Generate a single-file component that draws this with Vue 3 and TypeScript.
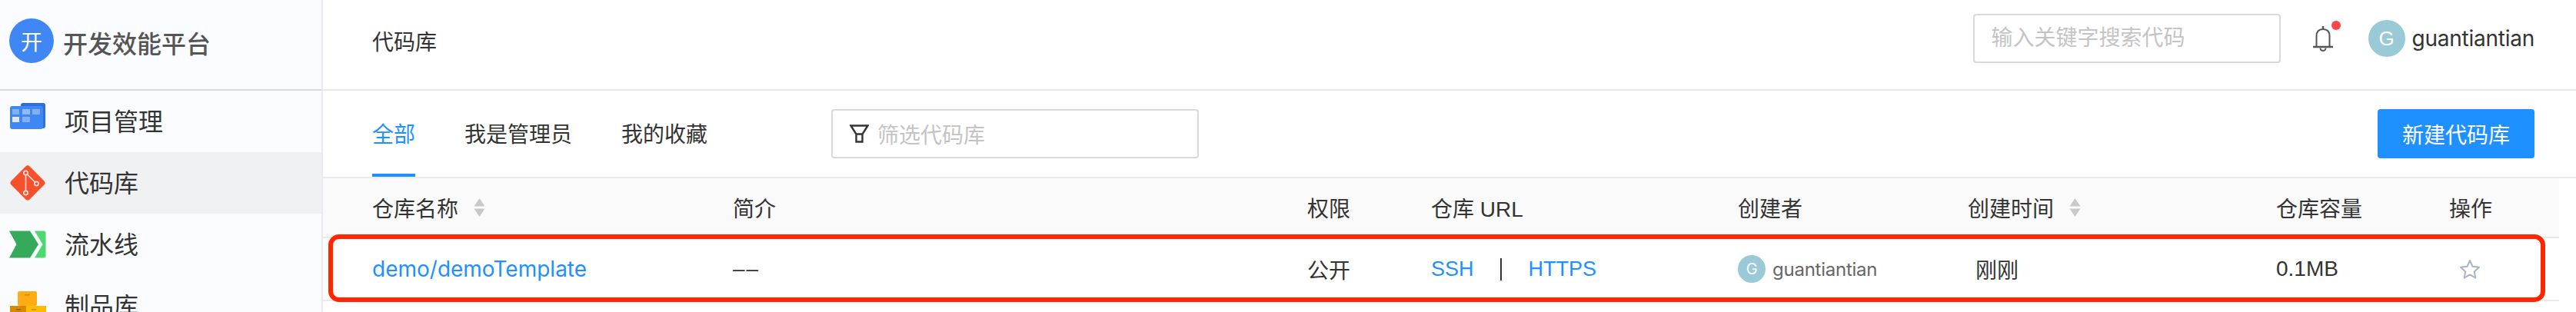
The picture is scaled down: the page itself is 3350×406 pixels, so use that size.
<template>
  <div class="page">
    <aside class="sidebar">
      <div class="brand">
        <span class="brand-logo">开</span>
        <span class="brand-name">开发效能平台</span>
      </div>
      <nav class="menu">
        <a v-for="item in menu" :key="item.key" class="menu-item" :class="{ active: item.key === 'repo' }">
          <svg class="menu-icon" viewBox="0 0 48 48">
            <template v-if="item.key === 'project'">
              <rect x="15" y="0" width="32" height="33" rx="3" fill="#2f6fd8" />
              <rect x="1" y="4" width="43" height="30" rx="3" fill="#3f87f5" />
              <rect x="4" y="8" width="9" height="7" fill="#7fb0f8" />
              <rect x="17" y="8" width="10" height="7" fill="#8fbaf9" />
              <rect x="30" y="8" width="10" height="7" fill="#7fb0f8" />
              <rect x="4" y="18" width="9" height="7" fill="#dbe8fd" />
              <rect x="17" y="18" width="10" height="7" fill="#7fb0f8" />
            </template>
            <template v-else-if="item.key === 'repo'">
              <rect x="7" y="7" width="34" height="34" rx="4" fill="#f4512c" transform="rotate(45 24 24)" />
              <path d="M21.500 11 V37 M21.500 11 L35.500 25" fill="none" stroke="#fbe3dc" stroke-width="1.600" />
              <circle cx="21.500" cy="11" r="2.600" fill="#f4512c" stroke="#fbe3dc" stroke-width="1.600" />
              <circle cx="35.500" cy="25" r="2.600" fill="#f4512c" stroke="#fbe3dc" stroke-width="1.600" />
              <circle cx="21.500" cy="37" r="2.600" fill="#f4512c" stroke="#fbe3dc" stroke-width="1.600" />
            </template>
            <template v-else-if="item.key === 'pipeline'">
              <path d="M0 6.500 H27 L38 24 L27 41.500 H0 L9.500 24 Z" fill="#34aa5a" />
              <path d="M33 6.500 H45 Q47.500 6.500 47.500 9 V39 Q47.500 41.500 45 41.500 H33 L43.500 24 Z" fill="#4cd96f" />
            </template>
            <template v-else>
              <rect x="11" y="5" width="25" height="19" rx="2" fill="#ffac14" />
              <rect x="1" y="24" width="21" height="24" fill="#d68a00" />
              <rect x="22" y="24" width="26" height="24" fill="#fcbc00" />
              <rect x="20" y="9" width="7" height="1.500" fill="#c98a10" />
              <rect x="9" y="28" width="6" height="1.500" fill="#8f5e00" />
              <rect x="29" y="28" width="6" height="1.500" fill="#c98a10" />
            </template>
          </svg>
          <span class="menu-label">{{ item.label }}</span>
        </a>
      </nav>
    </aside>

    <main class="main">
      <header class="topbar">
        <span class="crumb">代码库</span>
        <div class="topbar-right">
          <input class="field search" placeholder="输入关键字搜索代码" />
          <span class="bell">
            <svg viewBox="0 0 26 34" width="26" height="34">
              <path d="M4.500 28 V14 C4.500 8 8 5 13 5 C18 5 21.500 8 21.500 14 V28" fill="none" stroke="#555" stroke-width="2" />
              <path d="M13 1 V5" stroke="#555" stroke-width="2.500" />
              <path d="M0 28 H26" stroke="#555" stroke-width="2.500" />
              <path d="M9.500 29.500 A3.500 3.500 0 0 0 16.500 29.500" fill="none" stroke="#555" stroke-width="2" />
            </svg>
            <i class="bell-dot"></i>
          </span>
          <span class="user">
            <span class="avatar">G</span>
            <span class="user-name">guantiantian</span>
          </span>
        </div>
      </header>

      <section class="toolbar">
        <div class="tabs">
          <a v-for="(tab, i) in tabs" :key="tab" class="tab" :class="{ active: i === 0 }">{{ tab }}</a>
        </div>
        <div class="field filter">
          <svg viewBox="0 0 25 24" width="25" height="24">
            <path d="M1.500 1.500 H23.500 L16.500 12.500 V22.500 H8.500 V12.500 Z M8.500 12.500 H16.500" fill="none" stroke="#333" stroke-width="2.400" />
          </svg>
          <span>筛选代码库</span>
        </div>
        <button class="create">新建代码库</button>
      </section>

      <section class="table">
        <div class="grid head">
          <div v-for="col in columns" :key="col.label" class="th">
            <span>{{ col.label }}</span>
            <svg v-if="col.sort" class="sort" viewBox="0 0 15 24" width="15" height="24">
              <path d="M7.500 0 L14.500 10.500 H0.500 Z M7.500 24 L0.500 13.500 H14.500 Z" fill="#c9c9c9" />
            </svg>
          </div>
        </div>
        <div class="grid row">
          <a class="link repo-name">demo/demoTemplate</a>
          <div class="empty">––</div>
          <div>公开</div>
          <div class="urls">
            <a class="link">SSH</a>
            <i class="sep"></i>
            <a class="link">HTTPS</a>
          </div>
          <div class="creator">
            <span class="avatar small">G</span>
            <span>guantiantian</span>
          </div>
          <div class="time">刚刚</div>
          <div>0.1MB</div>
          <div class="ops">
            <svg viewBox="0 0 28 26" width="28" height="26">
              <path d="M14 2 L17.500 9.800 L26 10.700 L19.700 16.400 L21.400 24.600 L14 20.400 L6.600 24.600 L8.300 16.400 L2 10.700 L10.500 9.800 Z" fill="none" stroke="#a9b3c1" stroke-width="2" stroke-linejoin="round" />
            </svg>
          </div>
        </div>
        <div class="annotation"></div>
      </section>
    </main>
  </div>
</template>

<script setup lang="ts">
const menu = [
  { key: 'project', label: '项目管理' },
  { key: 'repo', label: '代码库' },
  { key: 'pipeline', label: '流水线' },
  { key: 'artifact', label: '制品库' },
];

const tabs = ['全部', '我是管理员', '我的收藏'];

const columns = [
  { label: '仓库名称', sort: true },
  { label: '简介' },
  { label: '权限' },
  { label: '仓库 URL' },
  { label: '创建者' },
  { label: '创建时间', sort: true },
  { label: '仓库容量' },
  { label: '操作' },
];
</script>

<style>
html,
body {
  margin: 0;
  background: #fff;
  overflow: hidden;
}
</style>

<style scoped>
.page {
  display: flex;
  height: 406px;
  overflow: hidden;
  font-family: "Liberation Sans", "Noto Sans CJK SC", sans-serif;
  font-size: 28px;
  color: #333;
}

.sidebar {
  flex: 0 0 420px;
  box-sizing: border-box;
  background: #fbfcff;
  border-right: 2px solid #e8eaee;
}

.brand {
  display: flex;
  align-items: center;
  height: 116px;
  padding-left: 12px;
  border-bottom: 2px solid #d8dadf;
}

.brand-logo {
  display: flex;
  align-items: center;
  justify-content: center;
  width: 58px;
  height: 58px;
  margin-top: -10px;
  border-radius: 50%;
  background: #3f87f5;
  color: #fff;
  font-size: 28px;
}

.brand-name {
  margin: -6px 0 0 12px;
  font-size: 32px;
  font-weight: 500;
  color: #555;
}

.menu-item {
  display: flex;
  align-items: center;
  gap: 24px;
  height: 80px;
  padding-left: 12px;
  font-size: 32px;
  color: #333;
}

.menu-item.active {
  background: #f0f1f3;
}

.menu-icon {
  flex: none;
  width: 48px;
  height: 48px;
}

.menu-label {
  margin-top: -5px;
}

.main {
  flex: 1;
  min-width: 0;
}

.topbar {
  display: flex;
  align-items: center;
  justify-content: space-between;
  box-sizing: content-box;
  height: 100px;
  padding: 0 54px 16px 64px;
  border-bottom: 2px solid #e8eaee;
}

.crumb {
  margin-top: 6px;
}

.topbar-right {
  display: flex;
  align-items: center;
}

.field {
  box-sizing: border-box;
  height: 64px;
  border: 2px solid #d9d9d9;
  border-radius: 4px;
  background: #fff;
  font: inherit;
}

.search {
  width: 400px;
  padding: 0 22px;
  outline: none;
}

.search::placeholder {
  color: #c4c4c4;
  opacity: 1;
}

.bell {
  position: relative;
  display: block;
  height: 34px;
  margin: 0 46px 0 42px;
}

.bell-dot {
  position: absolute;
  top: -6px;
  right: -10px;
  width: 12px;
  height: 12px;
  border-radius: 50%;
  background: #fb4646;
}

.user {
  display: flex;
  align-items: center;
  gap: 9px;
}

.avatar {
  display: flex;
  align-items: center;
  justify-content: center;
  width: 48px;
  height: 48px;
  border-radius: 50%;
  background: #9ac9d7;
  color: #fff;
  font-size: 26px;
}

.avatar.small {
  width: 36px;
  height: 36px;
  font-size: 20px;
}

.user-name {
  font-family: Inter, sans-serif;
  letter-spacing: -0.25px;
  color: #333;
}

.toolbar {
  display: flex;
  align-items: flex-start;
  height: 112px;
  padding: 0 54px 0 64px;
  border-bottom: 2px solid #e8eaee;
}

.tabs {
  display: flex;
  gap: 64px;
}

.tab {
  display: block;
  box-sizing: border-box;
  height: 112px;
  padding-top: 38px;
  line-height: 40px;
}

.tab.active {
  color: #1f90ff;
  border-bottom: 4px solid #1f90ff;
}

.filter {
  display: flex;
  align-items: center;
  gap: 11px;
  width: 478px;
  margin: 24px 0 0 161px;
  padding-left: 22px;
  color: #c4c4c4;
}

.create {
  width: 204px;
  height: 64px;
  margin: 24px 0 0 auto;
  border: 0;
  border-radius: 4px;
  background: #1f90ff;
  color: #fff;
  font: inherit;
}

.table {
  position: relative;
  width: 2908px;
}

.grid {
  display: grid;
  grid-template-columns: 469px 747px 161px 399px 299px 401px 225px 143px;
  align-items: center;
  padding-left: 64px;
  border-bottom: 2px solid #e8eaee;
}

.head {
  height: 76px;
  background: #fafafa;
}

.th {
  display: flex;
  align-items: center;
  gap: 20px;
}

.row {
  height: 80px;
}

.link {
  color: #1f90ff;
}

.repo-name {
  font-family: Inter, sans-serif;
}

.empty {
  letter-spacing: 2px;
}

.urls {
  display: flex;
  align-items: center;
  font-size: 27px;
}

.sep {
  width: 2px;
  height: 29px;
  margin: 0 35px 0 34px;
  background: #333;
}

.creator {
  display: flex;
  align-items: center;
  gap: 9px;
  font-family: Inter, sans-serif;
  letter-spacing: -0.25px;
  font-size: 24px;
  color: #666;
}

.time {
  padding-left: 10px;
}

.ops {
  display: flex;
  padding-left: 13px;
}

.annotation {
  position: absolute;
  left: 7px;
  top: 73px;
  box-sizing: border-box;
  width: 2883px;
  height: 88px;
  border: 6px solid #ff2600;
  border-radius: 14px;
}
</style>
